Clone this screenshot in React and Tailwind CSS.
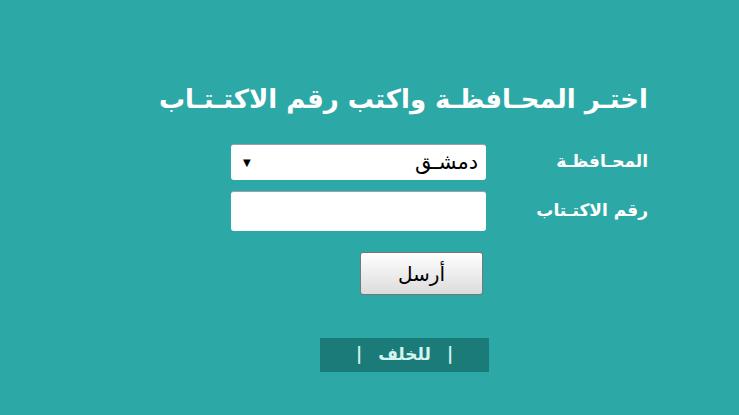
import React from "react";

const App = () => {
  return (
    <div
      dir="rtl"
      className="w-[739px] h-[415px] bg-[#2ca9a6] overflow-hidden"
      style={{ fontFamily: '"DejaVu Sans", "Liberation Sans", sans-serif' }}
    >
      <div className="mr-[91px] pt-[81px]">
        <h1 className="text-[26px] leading-[36px] font-bold text-white">
          اختـر المحـافظـة واكتب رقم الاكتـتـاب
        </h1>

        <div className="mt-[27px] grid grid-cols-[162px_255px] gap-y-[11px] items-center">
          <label className="text-[17px] font-bold text-white">المحـافظـة</label>
          <div className="h-[36px] bg-white rounded-[3px] border-t border-gray-400 flex items-center justify-between pr-2 pl-3">
            <span className="text-[21px] text-black">دمشـق</span>
            <span className="text-[10px] text-black">▼</span>
          </div>

          <label className="text-[17px] font-bold text-white">رقم الاكتـتاب</label>
          <input
            type="text"
            className="h-[40px] bg-white rounded-[3px] border-t border-gray-400 outline-none"
          />
        </div>

        <div className="mr-[165px] mt-[21px]">
          <button className="w-[123px] h-[43px] rounded-[3px] border border-[#777] bg-gradient-to-b from-white to-[#dcdcdc] text-[20px] text-black">
            أرسل
          </button>
        </div>

        <div className="mr-[159px] mt-[43px] w-[169px] h-[34px] bg-[#1b7b79] flex items-center justify-center gap-[16px] text-[#d5f3f1] text-[17px] font-bold">
          <span>|</span>
          <span>للخلف</span>
          <span>|</span>
        </div>
      </div>
    </div>
  );
};

export default App;
